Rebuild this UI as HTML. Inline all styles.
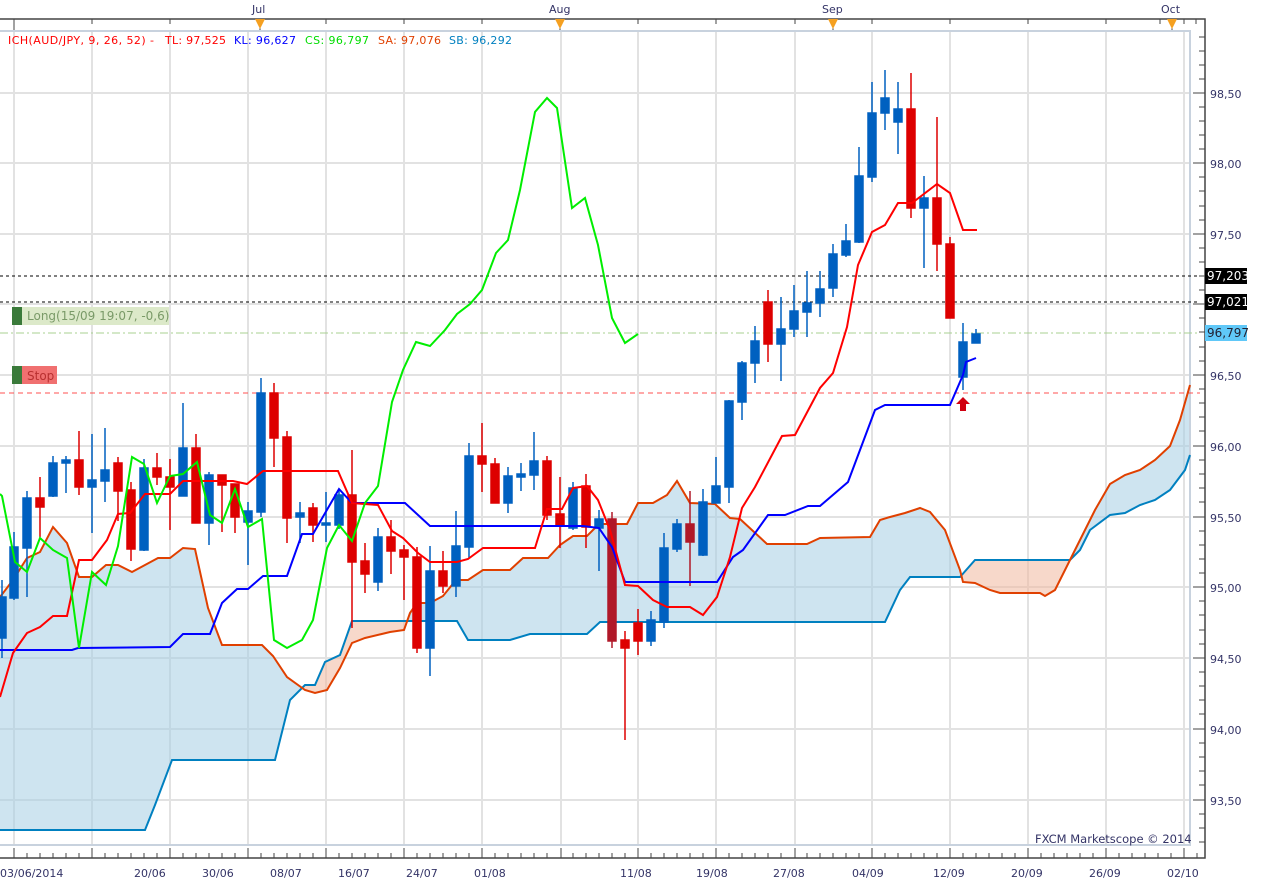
<!DOCTYPE html>
<html><head><meta charset="utf-8"><style>
html,body{margin:0;padding:0;background:#fff;}
svg{display:block;}
text{font-family:"DejaVu Sans","Liberation Sans",sans-serif;font-size:11px;}
</style></head><body>
<svg width="1263" height="884" viewBox="0 0 1263 884" xmlns="http://www.w3.org/2000/svg">
<defs>
<clipPath id="aboveSB"><polygon points="0,0 0,830 145,830 155,805 172,760 275,760 290,700 305,685 315,685 325,662 340,655 352,621 457,621 468,640 510,640 530,634 587,634 600,622 885,622 900,590 910,577 960,577 975,560 1070,560 1080,550 1090,530 1110,515 1125,513 1140,505 1155,500 1170,490 1185,470 1190,455 1190,0"/></clipPath>
<clipPath id="belowSB"><polygon points="0,900 0,830 145,830 155,805 172,760 275,760 290,700 305,685 315,685 325,662 340,655 352,621 457,621 468,640 510,640 530,634 587,634 600,622 885,622 900,590 910,577 960,577 975,560 1070,560 1080,550 1090,530 1110,515 1125,513 1140,505 1155,500 1170,490 1185,470 1190,455 1190,900"/></clipPath>
</defs>
<!-- grid -->
<g stroke="#e2e2e2" stroke-width="2">
<line x1="14" y1="31" x2="14" y2="845"/><line x1="92" y1="31" x2="92" y2="845"/><line x1="170" y1="31" x2="170" y2="845"/><line x1="248" y1="31" x2="248" y2="845"/><line x1="326" y1="31" x2="326" y2="845"/><line x1="404" y1="31" x2="404" y2="845"/><line x1="482" y1="31" x2="482" y2="845"/><line x1="561" y1="31" x2="561" y2="845"/><line x1="638" y1="31" x2="638" y2="845"/><line x1="716" y1="31" x2="716" y2="845"/><line x1="795" y1="31" x2="795" y2="845"/><line x1="872" y1="31" x2="872" y2="845"/><line x1="950" y1="31" x2="950" y2="845"/><line x1="1028" y1="31" x2="1028" y2="845"/><line x1="1106" y1="31" x2="1106" y2="845"/><line x1="1184" y1="31" x2="1184" y2="845"/>
<line x1="0" y1="93" x2="1190" y2="93"/><line x1="0" y1="163" x2="1190" y2="163"/><line x1="0" y1="234" x2="1190" y2="234"/><line x1="0" y1="304" x2="1190" y2="304"/><line x1="0" y1="375" x2="1190" y2="375"/><line x1="0" y1="446" x2="1190" y2="446"/><line x1="0" y1="517" x2="1190" y2="517"/><line x1="0" y1="587" x2="1190" y2="587"/><line x1="0" y1="658" x2="1190" y2="658"/><line x1="0" y1="729" x2="1190" y2="729"/><line x1="0" y1="800" x2="1190" y2="800"/>
</g>
<!-- cloud -->
<g>
<polygon clip-path="url(#aboveSB)" fill="#a6cde4" fill-opacity="0.55" points="0,900 0,597 13,580 27,558 40,552 53,527 67,543 79,577 92,577 106,565 118,565 132,572 145,565 158,558 170,558 183,548 195,549 208,608 222,645 262,645 273,656 287,677 305,690 315,693 327,690 340,668 352,643 365,638 390,632 404,630 410,613 417,603 430,603 443,596 456,580 468,580 483,570 510,570 523,558 548,558 560,545 573,536 587,536 599,524 627,524 638,503 653,503 667,495 677,481 690,503 715,504 730,518 740,519 767,544 807,544 820,538 870,537 880,520 890,517 905,513 920,508 930,512 945,530 960,570 963,582 975,583 990,590 1000,593 1040,593 1045,596 1055,590 1065,570 1080,540 1095,510 1110,484 1125,475 1140,470 1155,460 1170,446 1180,420 1190,385 1190,900"/>
<polygon clip-path="url(#belowSB)" fill="#f0b89e" fill-opacity="0.55" points="0,0 0,597 13,580 27,558 40,552 53,527 67,543 79,577 92,577 106,565 118,565 132,572 145,565 158,558 170,558 183,548 195,549 208,608 222,645 262,645 273,656 287,677 305,690 315,693 327,690 340,668 352,643 365,638 390,632 404,630 410,613 417,603 430,603 443,596 456,580 468,580 483,570 510,570 523,558 548,558 560,545 573,536 587,536 599,524 627,524 638,503 653,503 667,495 677,481 690,503 715,504 730,518 740,519 767,544 807,544 820,538 870,537 880,520 890,517 905,513 920,508 930,512 945,530 960,570 963,582 975,583 990,590 1000,593 1040,593 1045,596 1055,590 1065,570 1080,540 1095,510 1110,484 1125,475 1140,470 1155,460 1170,446 1180,420 1190,385 1190,0"/>
</g>
<!-- plot border -->
<polyline points="0,31 1190,31 1190,845 0,845" fill="none" stroke="#c8d2de" stroke-width="2"/>
<!-- horizontal level lines -->
<line x1="0" y1="276" x2="1200" y2="276" stroke="#000" stroke-dasharray="3,3"/>
<line x1="0" y1="302" x2="1200" y2="302" stroke="#000" stroke-dasharray="3,3"/>
<line x1="0" y1="333" x2="1200" y2="333" stroke="#a8d090" stroke-dasharray="8,3,2,3"/>
<line x1="0" y1="393" x2="1200" y2="393" stroke="#ff5050" stroke-dasharray="5,4"/>
<!-- senkou lines -->
<polyline fill="none" stroke="#0080c0" stroke-width="2" points="0,830 145,830 155,805 172,760 275,760 290,700 305,685 315,685 325,662 340,655 352,621 457,621 468,640 510,640 530,634 587,634 600,622 885,622 900,590 910,577 960,577 975,560 1070,560 1080,550 1090,530 1110,515 1125,513 1140,505 1155,500 1170,490 1185,470 1190,455"/>
<polyline fill="none" stroke="#e04000" stroke-width="2" points="0,597 13,580 27,558 40,552 53,527 67,543 79,577 92,577 106,565 118,565 132,572 145,565 158,558 170,558 183,548 195,549 208,608 222,645 262,645 273,656 287,677 305,690 315,693 327,690 340,668 352,643 365,638 390,632 404,630 410,613 417,603 430,603 443,596 456,580 468,580 483,570 510,570 523,558 548,558 560,545 573,536 587,536 599,524 627,524 638,503 653,503 667,495 677,481 690,503 715,504 730,518 740,519 767,544 807,544 820,538 870,537 880,520 890,517 905,513 920,508 930,512 945,530 960,570 963,582 975,583 990,590 1000,593 1040,593 1045,596 1055,590 1065,570 1080,540 1095,510 1110,484 1125,475 1140,470 1155,460 1170,446 1180,420 1190,385"/>
<!-- candles -->
<g stroke-width="1.5">
<g stroke="#0060c0" fill="#0060c0">
<line x1="2" y1="580" x2="2" y2="658"/><rect x="-2" y="597" width="8" height="41"/>
<line x1="14" y1="532" x2="14" y2="600"/><rect x="10" y="547" width="8" height="51"/>
<line x1="27" y1="491" x2="27" y2="597"/><rect x="23" y="498" width="8" height="50"/>
<line x1="53" y1="456" x2="53" y2="497"/><rect x="49" y="463" width="8" height="33"/>
<line x1="66" y1="456" x2="66" y2="493"/><rect x="62" y="460" width="8" height="3"/>
<line x1="92" y1="434" x2="92" y2="533"/><rect x="88" y="480" width="8" height="7"/>
<line x1="105" y1="428" x2="105" y2="502"/><rect x="101" y="470" width="8" height="11"/>
<line x1="144" y1="459" x2="144" y2="551"/><rect x="140" y="468" width="8" height="82"/>
<line x1="183" y1="403" x2="183" y2="496"/><rect x="179" y="448" width="8" height="48"/>
<line x1="209" y1="472" x2="209" y2="545"/><rect x="205" y="475" width="8" height="48"/>
<line x1="248" y1="502" x2="248" y2="565"/><rect x="244" y="511" width="8" height="11"/>
<line x1="261" y1="378" x2="261" y2="517"/><rect x="257" y="393" width="8" height="119"/>
<line x1="300" y1="502" x2="300" y2="543"/><rect x="296" y="513" width="8" height="4"/>
<line x1="326" y1="492" x2="326" y2="542"/><rect x="322" y="523" width="8" height="2"/>
<line x1="339" y1="490" x2="339" y2="529"/><rect x="335" y="495" width="8" height="30"/>
<line x1="378" y1="528" x2="378" y2="591"/><rect x="374" y="537" width="8" height="45"/>
<line x1="430" y1="546" x2="430" y2="676"/><rect x="426" y="571" width="8" height="77"/>
<line x1="456" y1="511" x2="456" y2="597"/><rect x="452" y="546" width="8" height="40"/>
<line x1="469" y1="443" x2="469" y2="558"/><rect x="465" y="456" width="8" height="91"/>
<line x1="508" y1="467" x2="508" y2="513"/><rect x="504" y="476" width="8" height="27"/>
<line x1="521" y1="463" x2="521" y2="491"/><rect x="517" y="474" width="8" height="3"/>
<line x1="534" y1="432" x2="534" y2="490"/><rect x="530" y="461" width="8" height="14"/>
<line x1="573" y1="482" x2="573" y2="530"/><rect x="569" y="488" width="8" height="40"/>
<line x1="599" y1="510" x2="599" y2="571"/><rect x="595" y="519" width="8" height="9"/>
<line x1="651" y1="611" x2="651" y2="646"/><rect x="647" y="620" width="8" height="21"/>
<line x1="664" y1="533" x2="664" y2="628"/><rect x="660" y="548" width="8" height="74"/>
<line x1="677" y1="519" x2="677" y2="552"/><rect x="673" y="524" width="8" height="25"/>
<line x1="703" y1="489" x2="703" y2="556"/><rect x="699" y="502" width="8" height="53"/>
<line x1="716" y1="457" x2="716" y2="503"/><rect x="712" y="486" width="8" height="17"/>
<line x1="729" y1="400" x2="729" y2="503"/><rect x="725" y="401" width="8" height="86"/>
<line x1="742" y1="361" x2="742" y2="420"/><rect x="738" y="363" width="8" height="39"/>
<line x1="755" y1="326" x2="755" y2="383"/><rect x="751" y="341" width="8" height="22"/>
<line x1="781" y1="297" x2="781" y2="381"/><rect x="777" y="329" width="8" height="15"/>
<line x1="794" y1="285" x2="794" y2="337"/><rect x="790" y="311" width="8" height="18"/>
<line x1="807" y1="271" x2="807" y2="337"/><rect x="803" y="303" width="8" height="9"/>
<line x1="820" y1="271" x2="820" y2="317"/><rect x="816" y="289" width="8" height="14"/>
<line x1="833" y1="244" x2="833" y2="297"/><rect x="829" y="254" width="8" height="34"/>
<line x1="846" y1="224" x2="846" y2="257"/><rect x="842" y="241" width="8" height="14"/>
<line x1="859" y1="147" x2="859" y2="243"/><rect x="855" y="176" width="8" height="66"/>
<line x1="872" y1="82" x2="872" y2="182"/><rect x="868" y="113" width="8" height="64"/>
<line x1="885" y1="70" x2="885" y2="130"/><rect x="881" y="98" width="8" height="15"/>
<line x1="898" y1="82" x2="898" y2="154"/><rect x="894" y="109" width="8" height="13"/>
<line x1="924" y1="176" x2="924" y2="268"/><rect x="920" y="198" width="8" height="10"/>
<line x1="963" y1="323" x2="963" y2="390"/><rect x="959" y="342" width="8" height="35"/>
<line x1="976" y1="329" x2="976" y2="343"/><rect x="972" y="334" width="8" height="9"/>
</g>
<g stroke="#dd0000" fill="#dd0000">
<line x1="40" y1="477" x2="40" y2="537"/><rect x="36" y="498" width="8" height="9"/>
<line x1="79" y1="431" x2="79" y2="495"/><rect x="75" y="460" width="8" height="27"/>
<line x1="118" y1="457" x2="118" y2="521"/><rect x="114" y="463" width="8" height="28"/>
<line x1="131" y1="482" x2="131" y2="561"/><rect x="127" y="490" width="8" height="59"/>
<line x1="157" y1="453" x2="157" y2="485"/><rect x="153" y="468" width="8" height="9"/>
<line x1="170" y1="459" x2="170" y2="530"/><rect x="166" y="477" width="8" height="10"/>
<line x1="196" y1="434" x2="196" y2="523"/><rect x="192" y="448" width="8" height="75"/>
<line x1="222" y1="475" x2="222" y2="532"/><rect x="218" y="475" width="8" height="10"/>
<line x1="235" y1="484" x2="235" y2="533"/><rect x="231" y="484" width="8" height="33"/>
<line x1="274" y1="383" x2="274" y2="467"/><rect x="270" y="393" width="8" height="45"/>
<line x1="287" y1="431" x2="287" y2="543"/><rect x="283" y="437" width="8" height="81"/>
<line x1="313" y1="503" x2="313" y2="542"/><rect x="309" y="508" width="8" height="17"/>
<line x1="352" y1="450" x2="352" y2="628"/><rect x="348" y="495" width="8" height="67"/>
<line x1="365" y1="543" x2="365" y2="593"/><rect x="361" y="561" width="8" height="13"/>
<line x1="391" y1="520" x2="391" y2="574"/><rect x="387" y="537" width="8" height="14"/>
<line x1="404" y1="545" x2="404" y2="600"/><rect x="400" y="550" width="8" height="7"/>
<line x1="417" y1="547" x2="417" y2="653"/><rect x="413" y="557" width="8" height="91"/>
<line x1="443" y1="551" x2="443" y2="593"/><rect x="439" y="571" width="8" height="15"/>
<line x1="482" y1="423" x2="482" y2="492"/><rect x="478" y="456" width="8" height="8"/>
<line x1="495" y1="458" x2="495" y2="503"/><rect x="491" y="464" width="8" height="39"/>
<line x1="547" y1="456" x2="547" y2="520"/><rect x="543" y="461" width="8" height="54"/>
<line x1="560" y1="477" x2="560" y2="548"/><rect x="556" y="514" width="8" height="12"/>
<line x1="586" y1="474" x2="586" y2="548"/><rect x="582" y="486" width="8" height="41"/>
<line x1="625" y1="631" x2="625" y2="740"/><rect x="621" y="640" width="8" height="8"/>
<line x1="638" y1="609" x2="638" y2="655"/><rect x="634" y="623" width="8" height="18"/>
<line x1="768" y1="290" x2="768" y2="362"/><rect x="764" y="302" width="8" height="42"/>
<line x1="911" y1="73" x2="911" y2="218"/><rect x="907" y="109" width="8" height="99"/>
<line x1="937" y1="117" x2="937" y2="271"/><rect x="933" y="198" width="8" height="46"/>
<line x1="950" y1="237" x2="950" y2="318"/><rect x="946" y="244" width="8" height="74"/>
</g>
<g stroke="#b01828" fill="#b01828">
<line x1="612" y1="512" x2="612" y2="648"/><rect x="608" y="519" width="8" height="122"/>
<line x1="690" y1="491" x2="690" y2="586"/><rect x="686" y="524" width="8" height="18"/>
</g>
</g>
<!-- kijun -->
<polyline fill="none" stroke="#0000ff" stroke-width="2" points="0,650 72,650 78,648 170,647 183,634 210,634 222,603 237,589 248,589 263,576 287,576 302,534 313,534 339,489 352,503 405,503 430,526 583,526 599,528 612,547 625,582 717,582 733,557 743,550 768,515 785,515 808,506 820,506 848,482 875,410 885,405 950,405 963,375 966,362 976,358"/>
<!-- tenkan -->
<polyline fill="none" stroke="#ff0000" stroke-width="2" points="0,697 13,653 27,633 40,627 53,616 67,616 79,560 92,560 107,540 118,514 130,513 145,494 170,494 183,481 233,481 247,484 263,471 338,471 352,503 378,505 392,531 403,538 418,553 430,562 457,562 468,559 483,548 535,548 547,509 562,509 573,488 587,486 598,500 610,530 625,585 638,586 653,600 667,607 690,607 703,615 717,597 730,557 742,508 755,487 782,436 795,435 803,420 820,388 833,373 847,327 858,265 872,232 885,225 898,203 912,203 937,184 950,193 963,230 977,230"/>
<!-- chikou -->
<polyline fill="none" stroke="#00ee00" stroke-width="2" points="0,494 2,496 15,562 27,572 40,538 53,550 67,558 79,648 92,572 106,585 118,546 132,457 144,464 157,503 170,476 183,474 197,462 210,515 222,523 235,489 248,527 262,519 274,640 287,648 302,640 313,620 327,548 339,525 352,541 365,503 378,486 392,402 403,370 416,342 430,346 445,330 457,314 470,304 482,290 496,253 508,240 520,190 535,112 547,98 557,108 572,208 585,198 598,245 612,318 625,343 638,334"/>
<!-- arrow -->
<polygon points="963,397 970,404 966,404 966,411 960,411 960,404 956,404" fill="#d00010"/>
<!-- markers -->
<rect x="12" y="307" width="10" height="18" fill="#3a7a3a"/>
<rect x="22" y="307" width="147" height="18" fill="#dce9c9"/>
<text x="27" y="320" fill="#7a9a68" style="font-size:12px">Long(15/09 19:07, -0,6)</text>
<rect x="12" y="366" width="10" height="18" fill="#3a7a3a"/>
<rect x="22" y="366" width="35" height="18" fill="#f07070"/>
<text x="27" y="380" fill="#b83030" style="font-size:12px">Stop</text>
<!-- header -->
<g style="font-size:12px">
<text x="8" y="44" fill="#ff0000" textLength="146">ICH(AUD/JPY, 9, 26, 52) -</text>
<text x="165" y="44" fill="#ff0000" textLength="61">TL: 97,525</text>
<text x="234" y="44" fill="#0000ff" textLength="62">KL: 96,627</text>
<text x="305" y="44" fill="#00dd00" textLength="64">CS: 96,797</text>
<text x="378" y="44" fill="#e04000" textLength="63">SA: 97,076</text>
<text x="449" y="44" fill="#0080c0" textLength="63">SB: 96,292</text>
</g>
<text x="1035" y="843" fill="#333366" style="font-size:11.5px">FXCM Marketscope © 2014</text>
<!-- axes -->
<g stroke="#444" stroke-width="1.5" fill="none">
<polyline points="0,19 1205,19 1205,858 0,858"/>
</g>
<g stroke="#444" stroke-width="1">
<path d="M14,19v11M92,19v5M170,19v5M260,19v11M326,19v5M404,19v5M482,19v5M560,19v11M638,19v5M716,19v5M795,19v5M833,19v11M872,19v5M950,19v5M1028,19v5M1106,19v5M1172,19v11M1184,19v5M1196,19v5M1160,19v5"/>
<path d="M14,858v-10M92,858v-10M170,858v-10M248,858v-10M326,858v-10M404,858v-10M482,858v-10M561,858v-10M638,858v-10M716,858v-10M795,858v-10M872,858v-10M950,858v-10M1028,858v-10M1106,858v-10M1184,858v-10"/>
<path d="M27,858v-5M40,858v-5M53,858v-5M66,858v-5M79,858v-5M105,858v-5M118,858v-5M131,858v-5M144,858v-5M157,858v-5M183,858v-5M196,858v-5M209,858v-5M222,858v-5M235,858v-5M261,858v-5M274,858v-5M287,858v-5M300,858v-5M313,858v-5M339,858v-5M352,858v-5M365,858v-5M378,858v-5M391,858v-5M417,858v-5M430,858v-5M443,858v-5M456,858v-5M469,858v-5M495,858v-5M508,858v-5M521,858v-5M534,858v-5M547,858v-5M573,858v-5M586,858v-5M599,858v-5M612,858v-5M625,858v-5M651,858v-5M664,858v-5M677,858v-5M690,858v-5M703,858v-5M729,858v-5M742,858v-5M755,858v-5M768,858v-5M781,858v-5M807,858v-5M820,858v-5M833,858v-5M846,858v-5M859,858v-5M885,858v-5M898,858v-5M911,858v-5M924,858v-5M937,858v-5M963,858v-5M976,858v-5M989,858v-5M1002,858v-5M1015,858v-5M1041,858v-5M1054,858v-5M1067,858v-5M1080,858v-5M1093,858v-5M1119,858v-5M1132,858v-5M1145,858v-5M1158,858v-5M1171,858v-5M1197,858v-5"/>
<path d="M1205,93h-12M1205,163h-12M1205,234h-12M1205,304h-12M1205,375h-12M1205,446h-12M1205,517h-12M1205,587h-12M1205,658h-12M1205,729h-12M1205,800h-12"/>
<path d="M1205,37h-6M1205,51h-6M1205,65h-6M1205,79h-6M1205,107h-6M1205,121h-6M1205,135h-6M1205,149h-6M1205,177h-6M1205,191h-6M1205,206h-6M1205,220h-6M1205,248h-6M1205,262h-6M1205,276h-6M1205,290h-6M1205,318h-6M1205,332h-6M1205,347h-6M1205,361h-6M1205,389h-6M1205,403h-6M1205,417h-6M1205,431h-6M1205,460h-6M1205,474h-6M1205,488h-6M1205,502h-6M1205,531h-6M1205,545h-6M1205,559h-6M1205,573h-6M1205,601h-6M1205,615h-6M1205,630h-6M1205,644h-6M1205,672h-6M1205,686h-6M1205,700h-6M1205,714h-6M1205,743h-6M1205,757h-6M1205,771h-6M1205,785h-6M1205,814h-6M1205,828h-6M1205,842h-6"/>
</g>
<g fill="#f5a020">
<polygon points="255,19 265,19 260,29"/><polygon points="555,19 565,19 560,29"/><polygon points="828,19 838,19 833,29"/><polygon points="1167,19 1177,19 1172,29"/>
</g>
<g fill="#333366" style="font-size:12px">
<text x="252" y="13">Jul</text><text x="549" y="13">Aug</text><text x="822" y="13">Sep</text><text x="1161" y="13">Oct</text>
<text x="1210" y="98">98,50</text><text x="1210" y="168">98,00</text><text x="1210" y="239">97,50</text><text x="1210" y="380">96,50</text><text x="1210" y="451">96,00</text><text x="1210" y="522">95,50</text><text x="1210" y="592">95,00</text><text x="1210" y="663">94,50</text><text x="1210" y="734">94,00</text><text x="1210" y="805">93,50</text>
<text x="0" y="877">03/06/2014</text><text x="134" y="877">20/06</text><text x="202" y="877">30/06</text><text x="270" y="877">08/07</text><text x="338" y="877">16/07</text><text x="406" y="877">24/07</text><text x="474" y="877">01/08</text><text x="620" y="877">11/08</text><text x="696" y="877">19/08</text><text x="773" y="877">27/08</text><text x="852" y="877">04/09</text><text x="933" y="877">12/09</text><text x="1011" y="877">20/09</text><text x="1089" y="877">26/09</text><text x="1167" y="877">02/10</text>
</g>
<rect x="1205" y="268" width="42" height="16" fill="#000"/><text x="1207" y="280" fill="#fff" style="font-size:12px">97,203</text>
<rect x="1205" y="294" width="42" height="16" fill="#000"/><text x="1207" y="306" fill="#fff" style="font-size:12px">97,021</text>
<rect x="1205" y="325" width="42" height="16" fill="#60c8f8"/><text x="1207" y="337" fill="#223" style="font-size:12px">96,797</text>
</svg>
</body></html>
